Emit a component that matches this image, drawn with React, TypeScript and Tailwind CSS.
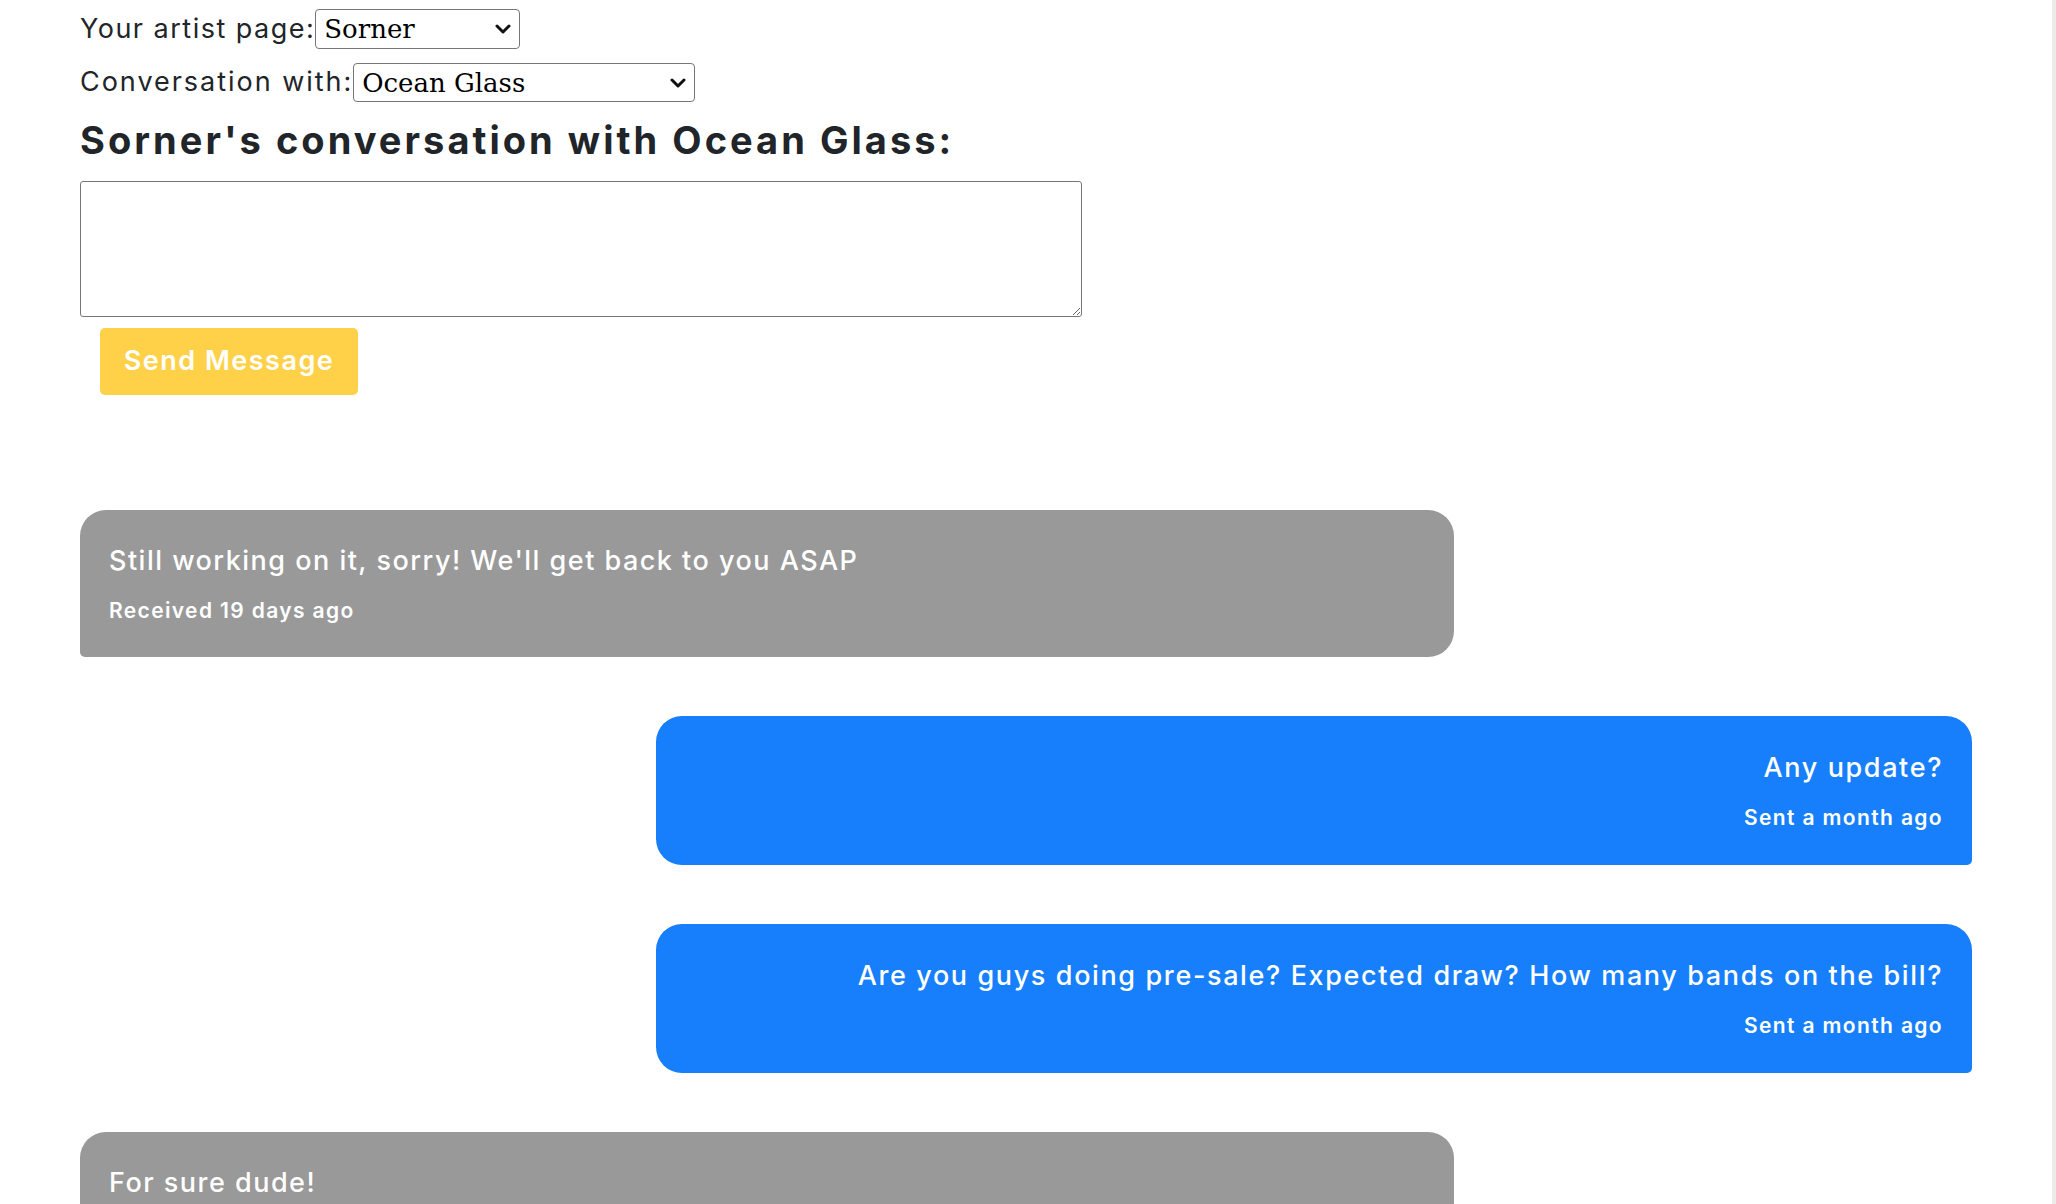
import React, { useState } from 'react';

interface Message {
  id: number;
  text: string;
  meta: string;
  sent: boolean;
}

const messages: Message[] = [
  { id: 1, text: "Still working on it, sorry! We'll get back to you ASAP", meta: 'Received 19 days ago', sent: false },
  { id: 2, text: 'Any update?', meta: 'Sent a month ago', sent: true },
  { id: 3, text: 'Are you guys doing pre-sale? Expected draw? How many bands on the bill?', meta: 'Sent a month ago', sent: true },
  { id: 4, text: 'For sure dude!', meta: 'Received a month ago', sent: false },
];

function Chevron() {
  return (
    <svg width="16" height="11" viewBox="0 0 16 11" className="pointer-events-none absolute right-[9px] top-1/2 -translate-y-1/2">
      <path d="M2 2.5 L8 8.5 L14 2.5" fill="none" stroke="#111" strokeWidth="3" strokeLinecap="round" strokeLinejoin="round" />
    </svg>
  );
}

function Picker({ value, options, width, height, onChange }: { value: string; options: string[]; width: string; height: string; onChange: (v: string) => void }) {
  return (
    <span className={`relative inline-block ${width} ${height}`}>
      <select
        value={value}
        onChange={e => onChange(e.target.value)}
        className="h-full w-full appearance-none rounded-[4px] border border-[#767676] bg-white pl-[8px] pr-[30px] text-[26px] tracking-normal text-black [font-family:'DejaVu_Serif',serif]"
      >
        {options.map(o => (
          <option key={o}>{o}</option>
        ))}
      </select>
      <Chevron />
    </span>
  );
}

function Bubble({ msg }: { msg: Message }) {
  if (msg.sent) {
    return (
      <div className="ml-auto w-[1316px] rounded-tl-[26px] rounded-tr-[26px] rounded-bl-[26px] rounded-br-[5px] bg-[#177ffb] px-[29px] pt-[36px] pb-[34px] text-right text-white">
        <p className="text-[27px] font-medium leading-[32px] tracking-[0.06em]">{msg.text}</p>
        <p className="mt-[21px] text-[21px] font-semibold leading-[26px] tracking-[0.065em]">{msg.meta}</p>
      </div>
    );
  }
  return (
    <div className="w-[1374px] rounded-tl-[26px] rounded-tr-[26px] rounded-br-[26px] rounded-bl-[5px] bg-[#999999] px-[29px] pt-[35px] pb-[33px] text-white">
      <p className="text-[27px] font-medium leading-[32px] tracking-[0.055em]">{msg.text}</p>
      <p className="mt-[21px] text-[21px] font-semibold leading-[26px] tracking-[0.065em]">{msg.meta}</p>
    </div>
  );
}

export default function App() {
  const [artist, setArtist] = useState('Sorner');
  const [other, setOther] = useState('Ocean Glass');
  const [draft, setDraft] = useState('');

  return (
    <div className="flex h-screen overflow-hidden bg-white text-[#212529] [font-family:Inter,'Open_Sans',sans-serif]">
      <main className="flex-1 px-[80px] pt-[9px]">
        <div className="flex h-[40px] items-center text-[27px] tracking-[0.055em]">
          <span>Your artist page:</span>
          <Picker value={artist} options={['Sorner']} width="w-[205px]" height="h-[40px]" onChange={setArtist} />
        </div>
        <div className="mt-[14px] flex h-[39px] items-center text-[27px] tracking-[0.073em]">
          <span>Conversation with:</span>
          <Picker value={other} options={['Ocean Glass']} width="w-[342px]" height="h-[39px]" onChange={setOther} />
        </div>
        <h2 className="mt-[16px] text-[38px] font-bold leading-[44px] tracking-[0.08em]">
          {artist}'s conversation with {other}:
        </h2>
        <textarea
          value={draft}
          onChange={e => setDraft(e.target.value)}
          className="mt-[19px] block h-[136px] w-[1002px] rounded-[3px] border border-[#767676] bg-white"
        />
        <button className="mt-[11px] ml-[20px] h-[67px] w-[258px] rounded-[5px] bg-[#fed149] text-[27px] font-semibold tracking-[0.055em] text-white">
          Send Message
        </button>
        <div className="mt-[115px] flex flex-col gap-[59px]">
          {messages.map(m => (
            <Bubble key={m.id} msg={m} />
          ))}
        </div>
      </main>
      <aside className="w-[4px] bg-[#ebebeb]" />
    </div>
  );
}
